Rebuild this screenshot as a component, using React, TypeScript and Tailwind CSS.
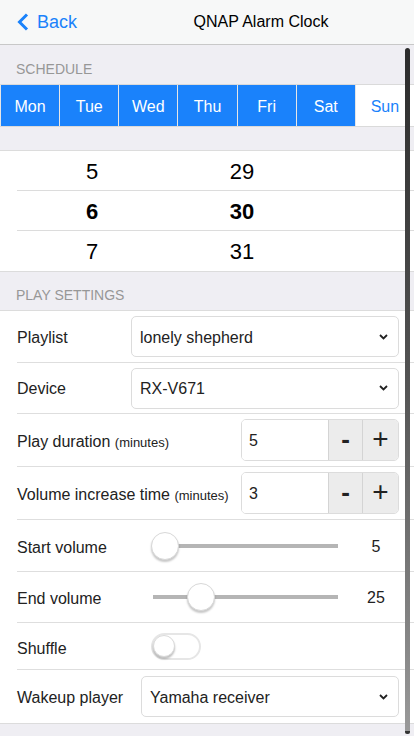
import React from "react";

const days = [
  { name: "Mon", on: true },
  { name: "Tue", on: true },
  { name: "Wed", on: true },
  { name: "Thu", on: true },
  { name: "Fri", on: true },
  { name: "Sat", on: true },
  { name: "Sun", on: false },
];

const pickerRows = [
  { h: "5", m: "29", sel: false },
  { h: "6", m: "30", sel: true },
  { h: "7", m: "31", sel: false },
];

function Chevron() {
  return (
    <svg width="9" height="6" viewBox="0 0 9 6" fill="none">
      <path d="M1 1 L4.5 4.5 L8 1" stroke="#222" strokeWidth="1.8" />
    </svg>
  );
}

function Select({ value }: { value: string }) {
  return (
    <div className="flex-1 h-[41px] bg-white border border-[#dcdcdc] rounded-[5px] flex items-center justify-between pl-[8px] pr-[10px] text-[16px] text-[#222]">
      <span className="pt-[2px]">{value}</span>
      <Chevron />
    </div>
  );
}

function Stepper({ value }: { value: string }) {
  return (
    <div className="ml-auto w-[158px] h-[42px] flex border border-[#dcdcdc] rounded-[5px] overflow-hidden text-[#222]">
      <div className="flex-1 flex items-center pl-[7px] pt-[2px] text-[16px] bg-white">{value}</div>
      <div className="w-[34px] flex items-center justify-center bg-[#ececec] border-l border-[#d4d4d4] text-[26px] font-bold leading-none pb-[2px]">
        -
      </div>
      <div className="w-[36px] flex items-center justify-center bg-[#ececec] border-l border-[#d4d4d4] text-[28px] leading-none pb-[3px]">
        +
      </div>
    </div>
  );
}

function Slider({ pos, value }: { pos: string; value: string }) {
  return (
    <>
      <div className="relative w-[187px] h-[28px]">
        <div className="absolute left-[2px] right-0 top-[12px] h-[4px] bg-[#b5b5b5]" />
        <div
          className={`absolute top-0 ${pos} w-[28px] h-[28px] rounded-full bg-white border border-[#d8d8d8] shadow-[0_2px_2px_rgba(0,0,0,0.22)]`}
        />
      </div>
      <div className="ml-auto w-[46px] pt-[2px] text-center text-[16px] text-[#222]">{value}</div>
    </>
  );
}

function Row({
  h,
  last,
  children,
}: {
  h: string;
  last?: boolean;
  children: React.ReactNode;
}) {
  return (
    <div className="pl-[17px]">
      <div
        className={`flex items-center pr-[15px] box-border ${h} ${last ? "" : "border-b border-[#dedede]"}`}
      >
        {children}
      </div>
    </div>
  );
}

export default function App() {
  return (
    <div className="relative w-[414px] h-[736px] overflow-hidden bg-[#efeef3] font-['Liberation_Sans',Arial,sans-serif]">
      {/* header */}
      <div className="h-[45px] bg-[#f7f8f8] border-b border-[#c8c8c8] flex items-center">
        <div className="w-[108px] flex items-center pl-[17px] gap-[8px] text-[#1a82fb]">
          <svg width="12" height="18" viewBox="0 0 12 18" fill="none">
            <path d="M10 1.5 L2.5 9 L10 16.5" stroke="#1a82fb" strokeWidth="3" />
          </svg>
          <span className="text-[18px]">Back</span>
        </div>
        <div className="flex-1 text-center text-[16px] text-black">QNAP Alarm Clock</div>
      </div>

      {/* schedule */}
      <div className="h-[39px] flex items-end pb-[4px] pl-4 text-[14px] text-[#979797]">SCHEDULE</div>
      <div className="grid grid-cols-7 border-y border-[#dadada]">
        {days.map((d) => (
          <div
            key={d.name}
            className={`h-[41px] flex items-center justify-center pt-[2px] text-[16px] border-l border-[#e6e6e6] ${
              d.on ? "bg-[#1a82fb] text-white" : "bg-white text-[#1a82fb]"
            }`}
          >
            {d.name}
          </div>
        ))}
      </div>

      {/* time picker */}
      <div className="mt-[23px] bg-white border-y border-[#dcdcdc]">
        {pickerRows.map((r, i) => (
          <div key={r.h} className="pl-[17px]">
            <div
              className={`h-[40px] box-border grid grid-cols-[150px_150px_1fr] items-center pt-[1px] text-[22px] text-black ${
                r.sel ? "font-bold" : ""
              } ${i < 2 ? "border-b border-[#dcdcdc]" : ""}`}
            >
              <div className="text-center">{r.h}</div>
              <div className="text-center">{r.m}</div>
              <div />
            </div>
          </div>
        ))}
      </div>

      {/* play settings */}
      <div className="h-[38px] flex items-end pb-[4px] pl-4 text-[14px] text-[#979797]">PLAY SETTINGS</div>
      <div className="bg-white border-y border-[#dcdcdc] text-[16px] text-[#222]">
        <Row h="h-[52px]">
          <div className="w-[114px] pt-[2px]">Playlist</div>
          <Select value="lonely shepherd" />
        </Row>
        <Row h="h-[51px]">
          <div className="w-[114px] pt-[2px]">Device</div>
          <Select value="RX-V671" />
        </Row>
        <Row h="h-[53px]">
          <div className="pt-[3px]">
            Play duration <span className="text-[13px]">(minutes)</span>
          </div>
          <Stepper value="5" />
        </Row>
        <Row h="h-[53px]">
          <div className="pt-[3px]">
            Volume increase time <span className="text-[13px]">(minutes)</span>
          </div>
          <Stepper value="3" />
        </Row>
        <Row h="h-[52px]">
          <div className="w-[134px] pt-[4px]">Start volume</div>
          <Slider pos="left-0" value="5" />
        </Row>
        <Row h="h-[51px]">
          <div className="w-[134px] pt-[4px]">End volume</div>
          <Slider pos="left-[36px]" value="25" />
        </Row>
        <Row h="h-[47px]">
          <div className="w-[134px] pt-[6px]">Shuffle</div>
          <div className="relative w-[50px] h-[27px] rounded-full border-2 border-[#e6e6e6] bg-white">
            <div className="absolute left-0 top-0 w-[22px] h-[22px] rounded-full bg-white border border-[#dadada] shadow-[0_2px_2px_rgba(0,0,0,0.25)]" />
          </div>
        </Row>
        <Row h="h-[53px]" last>
          <div className="w-[124px] pt-[2px]">Wakeup player</div>
          <Select value="Yamaha receiver" />
        </Row>
      </div>

      {/* scroll indicator */}
      <div className="absolute left-[405px] top-[48px] w-[5px] h-[686px] rounded-full bg-linear-to-b from-[#2c2c2c] via-[#555] to-[#9a9a9a]">
        <div className="absolute bottom-0 left-0 w-[5px] h-[3px] rounded-b-full bg-[#333]" />
      </div>
    </div>
  );
}
